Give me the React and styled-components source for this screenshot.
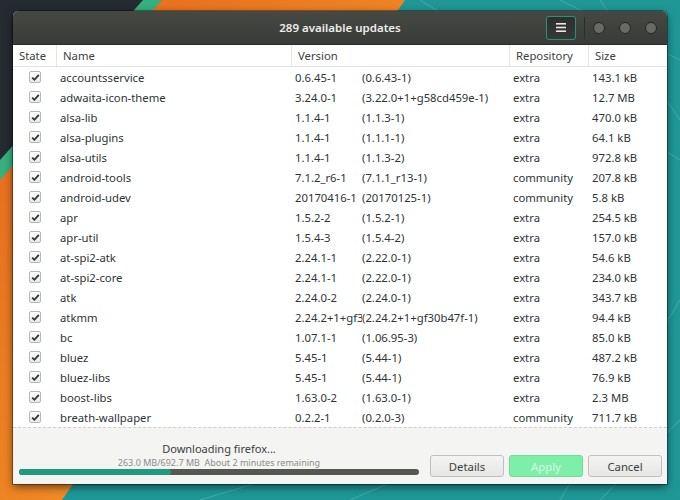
import React from "react"
import styled, { createGlobalStyle } from "styled-components"

let Global = createGlobalStyle`
    html, body {
        margin: 0;
        padding: 0;
        width: 680px;
        height: 500px;
        overflow: hidden;
        font-family: "Noto Sans", "Open Sans", sans-serif;
    }
`
let Page = styled.div`
    position: relative;
    width: 680px;
    height: 500px;
    padding: 11px 13px 0 13px;
    box-sizing: border-box;
`
let Wallpaper = styled.svg`
    position: absolute;
    left: 0;
    top: 0;
    width: 680px;
    height: 500px;
    z-index: 0;
`
let Window = styled.div`
    position: relative;
    z-index: 1;
    width: 654px;
    height: 473px;
    display: flex;
    flex-direction: column;
    border-radius: 5px 5px 0 0;
    background: #f6f5f4;
    box-shadow: 0 3px 9px rgba(0, 0, 0, 0.55), 0 0 0 1px rgba(0, 0, 0, 0.35);
    overflow: hidden;
`
let HeaderBar = styled.div`
    height: 33px;
    flex: none;
    display: grid;
    grid-template-columns: 1fr auto 1fr;
    align-items: center;
    background: linear-gradient(#464844, #393b38);
    border-bottom: 1px solid #2a2b29;
`
let Title = styled.div`
    grid-column: 2;
    color: #eeeeec;
    font-size: 11.5px;
    font-weight: 600;
`
let HeaderControls = styled.div`
    grid-column: 3;
    display: flex;
    align-items: center;
    justify-content: flex-end;
    padding-right: 10px;
`
let MenuButton = styled.div`
    width: 30px;
    height: 24px;
    box-sizing: border-box;
    border: 1px solid #2b8f7c;
    border-radius: 3px;
    background: linear-gradient(#2d2f2d, #363835);
    display: flex;
    align-items: center;
    justify-content: center;
    margin-right: 8px;
`
let Separator = styled.div`
    width: 1px;
    height: 22px;
    background: #2c2e2b;
    margin-right: 8px;
`
let WinCircle = styled.div`
    width: 12px;
    height: 12px;
    border-radius: 50%;
    box-sizing: border-box;
    border: 1.5px solid #232523;
    background: #686a65;
    margin-left: ${(p) => (p.first ? "0" : "14px")};
`
let Table = styled.div`
    flex: 1;
    background: #ffffff;
    display: flex;
    flex-direction: column;
`
let Row = styled.div`
    display: grid;
    grid-template-columns: 43px 235px 218px 79px 1fr;
    height: ${(p) => (p.head ? "21px" : "20px")};
    align-items: center;
    font-size: 11.3px;
    color: ${(p) => (p.head ? "#3c3f3f" : "#2e3436")};
    border-bottom: ${(p) => (p.head ? "1px solid #e2e2e0" : "none")};
`
let HeadCell = styled.div`
    height: 100%;
    display: flex;
    align-items: center;
    padding-left: 6px;
    border-left: ${(p) => (p.first ? "none" : "1px solid #e6e6e4")};
    box-sizing: border-box;
`
let Cell = styled.div`
    padding-left: ${(p) => (p.center ? "0" : "4px")};
    display: flex;
    justify-content: ${(p) => (p.center ? "center" : "flex-start")};
    white-space: nowrap;
    overflow: hidden;
`
let VerNew = styled.span`
    width: 67px;
    flex: none;
    overflow: hidden;
`
let Check = styled.div`
    width: 12px;
    height: 12px;
    box-sizing: border-box;
    border: 1px solid #b6b8b4;
    border-radius: 2px;
    background: linear-gradient(#ffffff, #e8e8e6);
    display: flex;
    align-items: center;
    justify-content: center;
    margin-left: 1px;
`
let Footer = styled.div`
    height: 57px;
    flex: none;
    border-top: 1px dashed #cfcfcd;
    background: #f4f4f3;
    display: flex;
    align-items: flex-end;
    padding: 0 5px 7px 6px;
    box-sizing: border-box;
`
let Progress = styled.div`
    flex: 1;
    display: flex;
    flex-direction: column;
    align-items: center;
    padding-bottom: 2px;
`
let Status = styled.div`
    font-size: 11px;
    color: #3a3d3d;
    margin-bottom: 0;
`
let Detail = styled.div`
    font-size: 9px;
    color: #8a8c8a;
    margin-bottom: 0;
`
let Bar = styled.div`
    width: 100%;
    height: 6px;
    border-radius: 3px;
    background: #555753;
    overflow: hidden;
`
let BarFill = styled.div`
    height: 100%;
    background: #1f9a7c;
    border-radius: 3px;
`
let Buttons = styled.div`
    display: flex;
    gap: 5px;
    margin-left: 11px;
`
let Button = styled.div`
    width: 74px;
    height: 22px;
    box-sizing: border-box;
    border: 1px solid ${(p) => (p.suggested ? "#6fdc9c" : "#c0c1be")};
    border-radius: 3px;
    background: ${(p) => (p.suggested ? "#7eefa9" : "linear-gradient(#f4f4f3, #e6e6e4)")};
    color: ${(p) => (p.suggested ? "#d6fbe4" : "#3c3f3f")};
    font-size: 11.3px;
    display: flex;
    align-items: center;
    justify-content: center;
`

let packages = [
    ["accountsservice", "0.6.45-1", "(0.6.43-1)", "extra", "143.1 kB"],
    ["adwaita-icon-theme", "3.24.0-1", "(3.22.0+1+g58cd459e-1)", "extra", "12.7 MB"],
    ["alsa-lib", "1.1.4-1", "(1.1.3-1)", "extra", "470.0 kB"],
    ["alsa-plugins", "1.1.4-1", "(1.1.1-1)", "extra", "64.1 kB"],
    ["alsa-utils", "1.1.4-1", "(1.1.3-2)", "extra", "972.8 kB"],
    ["android-tools", "7.1.2_r6-1", "(7.1.1_r13-1)", "community", "207.8 kB"],
    ["android-udev", "20170416-1", "(20170125-1)", "community", "5.8 kB"],
    ["apr", "1.5.2-2", "(1.5.2-1)", "extra", "254.5 kB"],
    ["apr-util", "1.5.4-3", "(1.5.4-2)", "extra", "157.0 kB"],
    ["at-spi2-atk", "2.24.1-1", "(2.22.0-1)", "extra", "54.6 kB"],
    ["at-spi2-core", "2.24.1-1", "(2.22.0-1)", "extra", "234.0 kB"],
    ["atk", "2.24.0-2", "(2.24.0-1)", "extra", "343.7 kB"],
    ["atkmm", "2.24.2+1+gf30b47f-2", "(2.24.2+1+gf30b47f-1)", "extra", "94.4 kB"],
    ["bc", "1.07.1-1", "(1.06.95-3)", "extra", "85.0 kB"],
    ["bluez", "5.45-1", "(5.44-1)", "extra", "487.2 kB"],
    ["bluez-libs", "5.45-1", "(5.44-1)", "extra", "76.9 kB"],
    ["boost-libs", "1.63.0-2", "(1.63.0-1)", "extra", "2.3 MB"],
    ["breath-wallpaper", "0.2.2-1", "(0.2.0-3)", "community", "711.7 kB"],
]

let CheckMark = () => (
    <svg width="9" height="9" viewBox="0 0 9 9">
        <path d="M1.2 4.6 L3.4 6.8 L7.8 1.8" fill="none" stroke="#2e3436" strokeWidth="1.8" />
    </svg>
)

export default () => {
    let rows = packages.map((p, index) => (
        <Row key={index}>
            <Cell center>
                <Check><CheckMark /></Check>
            </Cell>
            <Cell>{p[0]}</Cell>
            <Cell>
                <VerNew>{p[1]}</VerNew>
                <span>{p[2]}</span>
            </Cell>
            <Cell>{p[3]}</Cell>
            <Cell>{p[4]}</Cell>
        </Row>
    ))
    return (
        <Page>
            <Global />
            <Wallpaper viewBox="0 0 680 500" preserveAspectRatio="none">
                <defs>
                    <linearGradient id="orange" x1="0" y1="0" x2="1" y2="1">
                        <stop offset="0" stopColor="#e2651c" />
                        <stop offset="0.6" stopColor="#f08a26" />
                        <stop offset="1" stopColor="#f8a733" />
                    </linearGradient>
                </defs>
                <rect x="0" y="0" width="680" height="500" fill="#1f9797" />
                <g stroke="#ffffff" strokeOpacity="0.18" strokeWidth="1">
                    <line x1="420" y1="0" x2="680" y2="160" />
                    <line x1="560" y1="0" x2="680" y2="60" />
                    <line x1="680" y1="120" x2="600" y2="0" />
                    <line x1="680" y1="300" x2="560" y2="500" />
                    <line x1="200" y1="500" x2="300" y2="470" />
                    <line x1="350" y1="500" x2="420" y2="470" />
                    <line x1="680" y1="420" x2="600" y2="500" />
                </g>
                <polygon points="150,0 405,0 62,500 0,500 0,168" fill="url(#orange)" />
                <polygon points="140,0 162,0 0,180 0,158" fill="#36b07e" />
                <polygon points="0,0 143,0 0,160" fill="#242b31" />
            </Wallpaper>
            <Window>
                <HeaderBar>
                    <Title>289 available updates</Title>
                    <HeaderControls>
                        <MenuButton>
                            <svg width="10" height="9" viewBox="0 0 10 9">
                                <rect x="0" y="0" width="10" height="1.6" fill="#e8e8e6" />
                                <rect x="0" y="3.7" width="10" height="1.6" fill="#e8e8e6" />
                                <rect x="0" y="7.4" width="10" height="1.6" fill="#e8e8e6" />
                            </svg>
                        </MenuButton>
                        <Separator />
                        <WinCircle first />
                        <WinCircle />
                        <WinCircle />
                    </HeaderControls>
                </HeaderBar>
                <Table>
                    <Row head>
                        <HeadCell first>State</HeadCell>
                        <HeadCell>Name</HeadCell>
                        <HeadCell>Version</HeadCell>
                        <HeadCell>Repository</HeadCell>
                        <HeadCell>Size</HeadCell>
                    </Row>
                    {rows}
                </Table>
                <Footer>
                    <Progress>
                        <Status>Downloading firefox...</Status>
                        <Detail>263.0 MB/692.7 MB&nbsp;&nbsp;About 2 minutes remaining</Detail>
                        <Bar>
                            <BarFill style={{ width: `${(263.0 / 692.7) * 100}%` }} />
                        </Bar>
                    </Progress>
                    <Buttons>
                        <Button>Details</Button>
                        <Button suggested>Apply</Button>
                        <Button>Cancel</Button>
                    </Buttons>
                </Footer>
            </Window>
        </Page>
    )
}
